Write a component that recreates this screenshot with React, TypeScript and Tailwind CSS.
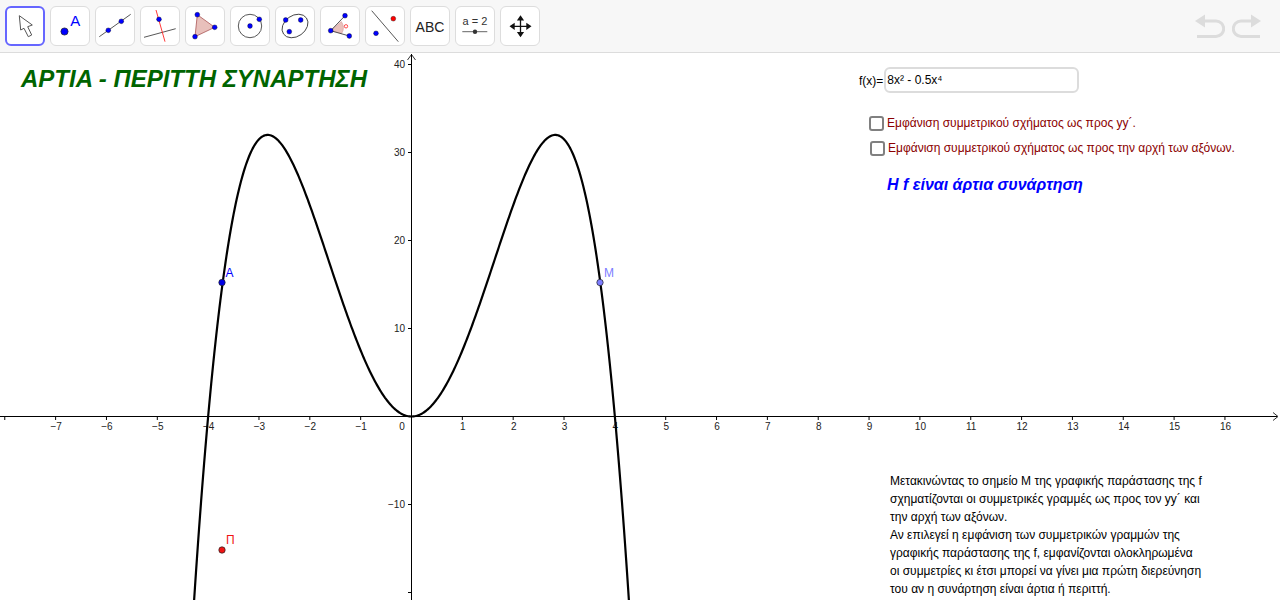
import React from "react";

const OX = 411.5, OY = 416.5, UX = 50.84, UY = 8.8;
const B = "#0000ff";

function curve() {
  const pts: string[] = [];
  for (let x = -4.4; x <= 4.4; x += 0.02) {
    const y = 8 * x * x - 0.5 * x ** 4;
    pts.push(`${(OX + x * UX).toFixed(2)},${(OY - y * UY).toFixed(2)}`);
  }
  return "M" + pts.join("L");
}

const Dot = ({ x, y, r = 2.4, fill = B }: { x: number; y: number; r?: number; fill?: string }) => (
  <circle cx={x} cy={y} r={r} fill={fill} stroke="#00000099" strokeWidth={0.6} />
);

const icons: React.ReactNode[] = [
  <path d="M13.3 8.7 14.7 23 18 21.3 22.3 29.7 25.7 28 21.7 19.7 26.3 18z" fill="#fff" stroke="#555" strokeWidth={1} strokeLinejoin="round" />,
  <>
    <circle cx={13.5} cy={24.5} r={3.6} fill={B} stroke="#222" strokeWidth={0.7} />
    <text x={19.2} y={18.7} fontSize={15} fill={B} fontFamily="Liberation Sans, sans-serif">A</text>
  </>,
  <>
    <path d="M3.3 29.7 34.7 7.3" stroke="#444" strokeWidth={0.9} />
    <Dot x={12.3} y={23.3} />
    <Dot x={25.3} y={14.3} />
  </>,
  <>
    <path d="M3 30.3 34.7 21.7" stroke="#444" strokeWidth={0.9} />
    <path d="M15 3 24 34.7" stroke="#f22" strokeWidth={0.9} />
    <Dot x={18} y={12.3} />
  </>,
  <>
    <path d="M11.3 7.7 9 29.7 28.7 20.3z" fill="#e8c0bb" stroke="#a55" strokeWidth={0.8} />
    <Dot x={11.3} y={7.7} />
    <Dot x={28.7} y={20.3} />
    <Dot x={9} y={29.7} />
  </>,
  <>
    <circle cx={19} cy={19} r={11.7} fill="none" stroke="#444" strokeWidth={0.9} />
    <Dot x={19} y={19} />
    <Dot x={28.3} y={12.3} />
  </>,
  <>
    <ellipse cx={19} cy={19} rx={14} ry={10.5} transform="rotate(-35 19 19)" fill="none" stroke="#444" strokeWidth={0.9} />
    <Dot x={9.7} y={13} />
    <Dot x={24.7} y={13} />
    <Dot x={13.3} y={24.7} />
  </>,
  <>
    <path d="M9.7 23.7 20.3 14.5 A11 11 0 0 1 20.7 26.5z" fill="#e8c0bb" stroke="#c88" strokeWidth={0.5} />
    <path d="M9.7 23.7 24 8.7M9.7 23.7 28.3 29" stroke="#444" strokeWidth={0.9} fill="none" />
    <Dot x={9.7} y={23.7} />
    <Dot x={24} y={8.7} />
    <Dot x={28.3} y={29} />
    <circle cx={25} cy={19.3} r={1.7} fill="none" stroke="#f22" strokeWidth={0.8} />
  </>,
  <>
    <path d="M5.7 3.7 32.3 34.7" stroke="#444" strokeWidth={0.9} />
    <Dot x={10} y={26.3} />
    <Dot x={27.3} y={11.7} fill="#f00" />
  </>,
  <text x={19} y={24.5} fontSize={14} textAnchor="middle" fill="#222" fontFamily="Liberation Sans, sans-serif">ABC</text>,
  <>
    <text x={19} y={18} fontSize={11} textAnchor="middle" fill="#333" fontFamily="Liberation Sans, sans-serif">a = 2</text>
    <path d="M6.3 24.7H31.3" stroke="#666" strokeWidth={1} />
    <circle cx={19} cy={24.7} r={2.2} fill="#333" />
  </>,
  <>
    <path d="M19.5 10V28.6M10 19.3H29" stroke="#111" strokeWidth={1.3} />
    <path d="M19.5 8.3l-3.6 5.2h7.2zM19.5 30.3l-3.6-5.2h7.2zM8.5 19.3l5.2-3.6v7.2zM30.5 19.3l-5.2-3.6v7.2z" fill="#111" />
  </>,
];

function ToolButton({ active, children }: { active?: boolean; children: React.ReactNode }) {
  return (
    <div className={active
      ? "w-10 h-10 rounded-md bg-white border-2 border-[#6666ff]"
      : "w-10 h-10 rounded-md bg-white border border-[#dddddd]"}>
      {active
        ? <svg viewBox="1 1 36 36" className="w-9 h-9">{children}</svg>
        : <svg viewBox="0 0 38 38" className="w-[38px] h-[38px]">{children}</svg>}
    </div>
  );
}

function Graph() {
  const xs = [-8, -7, -6, -5, -4, -3, -2, -1, 1, 2, 3, 4, 5, 6, 7, 8, 9, 10, 11, 12, 13, 14, 15, 16];
  const ys = [40, 30, 20, 10, -10, -20];
  return (
    <svg width={1280} height={600} viewBox="0 0 1280 600" className="absolute left-0 top-[-53px]" fontFamily="Liberation Sans, sans-serif">
      <path d={`M0 ${OY}H1277`} stroke="#000" strokeWidth={1} />
      <path d={`M${OX} 600V54`} stroke="#000" strokeWidth={1} />
      <path d={`M1273 ${OY - 4}L1278 ${OY}L1273 ${OY + 4}`} fill="none" stroke="#000" strokeWidth={0.8} />
      <path d={`M${OX - 4} 60L${OX} 54.5L${OX + 4} 60`} fill="none" stroke="#000" strokeWidth={0.8} />
      {xs.map((v) => {
        const x = OX + v * UX;
        return (
          <g key={v}>
            <path d={`M${x} ${OY}v3.5`} stroke="#000" strokeWidth={1} />
            {v !== -8 && (
              <text x={x + 0.5} y={430} fontSize={10} textAnchor="middle" fill="#222">
                {v < 0 ? `\u2212${-v}` : v}
              </text>
            )}
          </g>
        );
      })}
      <text x={402} y={430} fontSize={10} textAnchor="middle" fill="#222">0</text>
      {ys.map((v) => {
        const y = OY - v * UY;
        return (
          <g key={v}>
            <path d={`M${OX - 3.5} ${y}H${OX}`} stroke="#000" strokeWidth={1} />
            {v !== -20 && (
              <text x={405} y={y + 3.5} fontSize={10} textAnchor="end" fill="#222">
                {v < 0 ? `\u2212${-v}` : v}
              </text>
            )}
          </g>
        );
      })}
      <path d={curve()} fill="none" stroke="#000" strokeWidth={2.2} />
      <circle cx={222} cy={282.5} r={3.2} fill="#0000e6" stroke="#222" strokeWidth={0.7} />
      <text x={225.5} y={277} fontSize={12} fill={B}>A</text>
      <circle cx={600} cy={282.5} r={3.2} fill="#7d7dff" stroke="#222" strokeWidth={0.7} />
      <text x={604} y={277} fontSize={12} fill="#7d7dff">M</text>
      <circle cx={222} cy={550} r={3.2} fill="#f01414" stroke="#222" strokeWidth={0.7} />
      <text x={226} y={544} fontSize={12} fill="#f01414">Π</text>
    </svg>
  );
}

const Check = ({ text, className }: { text: string; className: string }) => (
  <div className={`absolute flex items-center text-xs leading-none text-[#8b0000] whitespace-nowrap ${className}`}>
    <span className="w-[15px] h-[15px] mr-[3px] rounded-[3px] border-2 border-[#808080] bg-white" />
    <span className="-mt-px">{text}</span>
  </div>
);

const para = [
  "Μετακινώντας το σημείο Μ της γραφικής παράστασης της f",
  "σχηματίζονται οι συμμετρικές γραμμές ως προς τον yy´ και",
  "την αρχή των αξόνων.",
  "Αν επιλεγεί η εμφάνιση των συμμετρικών γραμμών της",
  "γραφικής παράστασης της f, εμφανίζονται ολοκληρωμένα",
  "οι συμμετρίες κι έτσι μπορεί να γίνει μια πρώτη διερεύνηση",
  "του αν η συνάρτηση είναι άρτια ή περιττή.",
];

export default function App() {
  return (
    <div className="w-[1280px] h-[600px] overflow-hidden bg-white flex flex-col font-['Liberation_Sans',sans-serif]">
      <header className="h-[53px] shrink-0 bg-[#f7f7f7] border-b border-[#dcdcdc] flex items-center pl-[5px] pr-[19px] pb-[1px]">
        <div className="flex gap-[5px]">
          {icons.map((ic, i) => (
            <ToolButton key={i} active={i === 0}>{ic}</ToolButton>
          ))}
        </div>
        <div className="ml-auto flex gap-[7px]">
          <svg width={30} height={26} viewBox="0 0 30 26" fill="none">
            <path d="M0 8 10 1.5v13z" fill="#dcdcdc" />
            <path d="M8 8h13a7.7 7.7 0 0 1 0 15.4H2" stroke="#dcdcdc" strokeWidth={3} />
          </svg>
          <svg width={29} height={26} viewBox="0 0 29 26" fill="none">
            <path d="M29 8 19 1.5v13z" fill="#dcdcdc" />
            <path d="M21 8H9a7.7 7.7 0 0 0 0 15.4h19" stroke="#dcdcdc" strokeWidth={3} />
          </svg>
        </div>
      </header>
      <main className="relative flex-1">
        <Graph />
        <h1 className="absolute left-[21px] top-[12px] text-2xl leading-7 font-bold italic text-[#006400] whitespace-nowrap">
          ΑΡΤΙΑ - ΠΕΡΙΤΤΗ ΣΥΝΑΡΤΗΣΗ
        </h1>
        <div className="absolute left-[859px] top-[15px] flex items-center text-xs text-black">
          <span>f(x)=</span>
          <div className="ml-px w-[195px] h-[26px] rounded-md border-2 border-[#dcdcdc] bg-white pl-[1px] flex items-center leading-none -mt-[1px]">
            8x² - 0.5x⁴
          </div>
        </div>
        <Check className="left-[869px] top-[63px]" text="Εμφάνιση συμμετρικού σχήματος ως προς yy´." />
        <Check className="left-[870px] top-[88px]" text="Εμφάνιση συμμετρικού σχήματος ως προς την αρχή των αξόνων." />
        <div className="absolute left-[887px] top-[122px] text-base leading-5 font-bold italic text-[#0000ff] whitespace-nowrap">
          Η f είναι άρτια συνάρτηση
        </div>
        <div className="absolute left-[890px] top-[419px] text-xs leading-[18px] text-black whitespace-nowrap">
          {para.map((l) => <div key={l}>{l}</div>)}
        </div>
      </main>
    </div>
  );
}
